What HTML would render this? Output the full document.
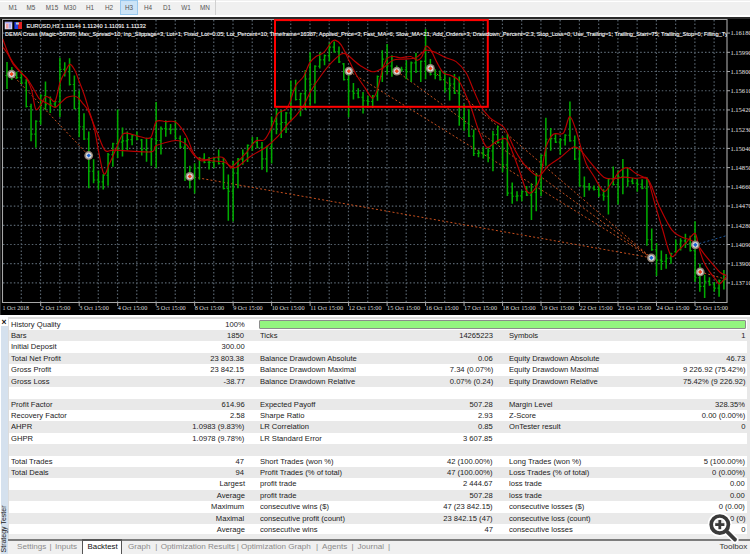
<!DOCTYPE html>
<html><head><meta charset="utf-8"><style>
*{margin:0;padding:0;box-sizing:border-box}
html,body{width:750px;height:554px;overflow:hidden;background:#f0f0f0;font-family:"Liberation Sans",sans-serif}
.abs{position:absolute}
#tb{position:absolute;left:0;top:0;width:750px;height:17px;background:#f0f0f0}
.tf{position:absolute;top:1.2px;width:20px;height:13px;line-height:13px;text-align:center;font-size:6.9px;color:#555;transform:scaleX(0.92)}
#chart{position:absolute;left:0;top:0}
#tbl{position:absolute;left:9px;top:318.6px;width:738px;height:221px;background:#fff;overflow:hidden}
.stripe{position:absolute;left:9px;width:738px;height:11.41px;background:#e9e9e9}
.tl,.tr{position:absolute;height:11.41px;line-height:11.81px;font-size:8.1px;color:#222;white-space:nowrap}
.tl{transform:scaleX(0.94);transform-origin:0 50%}
.tr{transform:scaleX(0.94);transform-origin:100% 50%}
.tab{position:absolute;top:540px;height:14px;line-height:13px;font-size:8.1px;color:#8a8a8a;white-space:nowrap}
.tab.sel{color:#111;font-size:7.9px}
</style></head><body>
<div id="tb">
<div class="abs" style="left:0;top:1.3px;width:750px;height:0.8px;background:#fff"></div>
<div class="abs" style="left:0;top:15px;width:750px;height:1.8px;background:#fff"></div>
<div class="abs" style="left:120px;top:0;width:18px;height:15px;background:#cce4f7;border:1px solid #99c9ef"></div>
<div class="tf" style="left:3px">M1</div><div class="tf" style="left:21px">M5</div><div class="tf" style="left:42px">M15</div><div class="tf" style="left:60px">M30</div><div class="tf" style="left:80px">H1</div><div class="tf" style="left:99px">H2</div><div class="tf" style="left:119px">H3</div><div class="tf" style="left:138px">H4</div><div class="tf" style="left:157px">D1</div><div class="tf" style="left:176px">W1</div><div class="tf" style="left:195px">MN</div>
<div class="abs" style="left:215px;top:0;width:1px;height:15px;background:#d0d0d0"></div>
</div>
<div class="abs" style="left:0;top:16.8px;width:750px;height:298px;background:#000"></div>
<div class="abs" style="left:0;top:16.8px;width:750px;height:2px;background:#2a2a2a"></div>
<div class="abs" style="left:0;top:16.8px;width:1.2px;height:298px;background:#2a2a2a"></div>
<svg id="chart" width="750" height="315" viewBox="0 0 750 315" style="position:absolute;left:0;top:0">
<defs><clipPath id="cl"><rect x="2.7" y="19.5" width="724.3" height="283"/></clipPath></defs>
<path d="M21.30 20V302 M40.55 20V302 M59.79 20V302 M79.03 20V302 M98.28 20V302 M117.53 20V302 M136.77 20V302 M156.02 20V302 M175.26 20V302 M194.51 20V302 M213.75 20V302 M233.00 20V302 M252.24 20V302 M271.49 20V302 M290.73 20V302 M309.98 20V302 M329.22 20V302 M348.47 20V302 M367.71 20V302 M386.96 20V302 M406.20 20V302 M425.45 20V302 M444.69 20V302 M463.94 20V302 M483.18 20V302 M502.43 20V302 M521.67 20V302 M540.91 20V302 M560.16 20V302 M579.40 20V302 M598.65 20V302 M617.89 20V302 M637.14 20V302 M656.38 20V302 M675.63 20V302 M694.88 20V302 M714.12 20V302 M3 33.08H727 M3 52.30H727 M3 71.52H727 M3 90.74H727 M3 109.96H727 M3 129.18H727 M3 148.40H727 M3 167.62H727 M3 186.84H727 M3 206.06H727 M3 225.28H727 M3 244.50H727 M3 263.72H727 M3 282.94H727" stroke="#58646f" stroke-width="1.2" stroke-dasharray="1.5 2.1" fill="none"/>
<path d="M2.5 19.5H727V302.5H2.5Z" stroke="#a8a8a8" stroke-width="1.1" fill="none"/>
<path d="M727 33.08H730 M727 52.30H730 M727 71.52H730 M727 90.74H730 M727 109.96H730 M727 129.18H730 M727 148.40H730 M727 167.62H730 M727 186.84H730 M727 206.06H730 M727 225.28H730 M727 244.50H730 M727 263.72H730 M727 282.94H730" stroke="#a8a8a8" stroke-width="1"/>
<g font-family="Liberation Serif" font-size="7.0" fill="#e4e4e4"><text x="730.4" y="35.48" textLength="21.3" lengthAdjust="spacingAndGlyphs">1.16180</text><text x="730.4" y="54.70" textLength="21.3" lengthAdjust="spacingAndGlyphs">1.15990</text><text x="730.4" y="73.92" textLength="21.3" lengthAdjust="spacingAndGlyphs">1.15800</text><text x="730.4" y="93.14" textLength="21.3" lengthAdjust="spacingAndGlyphs">1.15610</text><text x="730.4" y="112.36" textLength="21.3" lengthAdjust="spacingAndGlyphs">1.15420</text><text x="730.4" y="131.58" textLength="21.3" lengthAdjust="spacingAndGlyphs">1.15230</text><text x="730.4" y="150.80" textLength="21.3" lengthAdjust="spacingAndGlyphs">1.15040</text><text x="730.4" y="170.02" textLength="21.3" lengthAdjust="spacingAndGlyphs">1.14850</text><text x="730.4" y="189.24" textLength="21.3" lengthAdjust="spacingAndGlyphs">1.14660</text><text x="730.4" y="208.46" textLength="21.3" lengthAdjust="spacingAndGlyphs">1.14470</text><text x="730.4" y="227.68" textLength="21.3" lengthAdjust="spacingAndGlyphs">1.14280</text><text x="730.4" y="246.90" textLength="21.3" lengthAdjust="spacingAndGlyphs">1.14090</text><text x="730.4" y="266.12" textLength="21.3" lengthAdjust="spacingAndGlyphs">1.13900</text><text x="730.4" y="285.34" textLength="21.3" lengthAdjust="spacingAndGlyphs">1.13710</text></g>
<path d="M40.70 302.5V306 M79.19 302.5V306 M117.68 302.5V306 M156.17 302.5V306 M194.66 302.5V306 M233.15 302.5V306 M271.64 302.5V306 M310.13 302.5V306 M348.62 302.5V306 M387.11 302.5V306 M425.60 302.5V306 M464.09 302.5V306 M502.58 302.5V306 M541.07 302.5V306 M579.56 302.5V306 M618.05 302.5V306 M656.54 302.5V306 M695.03 302.5V306" stroke="#a8a8a8" stroke-width="1"/>
<g font-family="Liberation Serif" font-size="6.8" fill="#dcdcdc"><text x="2.6" y="310.1" textLength="26.5" lengthAdjust="spacingAndGlyphs">1 Oct 2018</text><text x="40.70" y="310.1" textLength="29.6" lengthAdjust="spacingAndGlyphs">2 Oct 15:00</text><text x="79.19" y="310.1" textLength="29.6" lengthAdjust="spacingAndGlyphs">3 Oct 15:00</text><text x="117.68" y="310.1" textLength="29.6" lengthAdjust="spacingAndGlyphs">4 Oct 15:00</text><text x="156.17" y="310.1" textLength="29.6" lengthAdjust="spacingAndGlyphs">5 Oct 15:00</text><text x="194.66" y="310.1" textLength="29.6" lengthAdjust="spacingAndGlyphs">8 Oct 15:00</text><text x="233.15" y="310.1" textLength="29.6" lengthAdjust="spacingAndGlyphs">9 Oct 15:00</text><text x="271.64" y="310.1" textLength="33.0" lengthAdjust="spacingAndGlyphs">10 Oct 15:00</text><text x="310.13" y="310.1" textLength="33.0" lengthAdjust="spacingAndGlyphs">11 Oct 15:00</text><text x="348.62" y="310.1" textLength="33.0" lengthAdjust="spacingAndGlyphs">12 Oct 15:00</text><text x="387.11" y="310.1" textLength="33.0" lengthAdjust="spacingAndGlyphs">15 Oct 15:00</text><text x="425.60" y="310.1" textLength="33.0" lengthAdjust="spacingAndGlyphs">16 Oct 15:00</text><text x="464.09" y="310.1" textLength="33.0" lengthAdjust="spacingAndGlyphs">17 Oct 15:00</text><text x="502.58" y="310.1" textLength="33.0" lengthAdjust="spacingAndGlyphs">18 Oct 15:00</text><text x="541.07" y="310.1" textLength="33.0" lengthAdjust="spacingAndGlyphs">19 Oct 15:00</text><text x="579.56" y="310.1" textLength="33.0" lengthAdjust="spacingAndGlyphs">22 Oct 15:00</text><text x="618.05" y="310.1" textLength="33.0" lengthAdjust="spacingAndGlyphs">23 Oct 15:00</text><text x="656.54" y="310.1" textLength="33.0" lengthAdjust="spacingAndGlyphs">24 Oct 15:00</text><text x="695.03" y="310.1" textLength="33.0" lengthAdjust="spacingAndGlyphs">25 Oct 15:00</text></g>
<g clip-path="url(#cl)">
<path d="M11.6 74.1L88.7 155.5 M189.8 176.4L651.4 257.8 M348.9 71.2L651.4 257.8 M396.8 71.2L651.4 257.8 M430.4 68.4L651.4 257.8 M700.2 271.9L727 279.5" stroke="#c8501e" stroke-width="1" stroke-dasharray="2 2.2" fill="none"/>
<path d="M695.3 244.8L727 235.5" stroke="#1e5aa0" stroke-width="1" stroke-dasharray="2 2.2" fill="none"/>
<path d="M7.00 62.1V88.9 M11.81 67.0V80.0 M16.62 71.8V79.1 M21.43 71.0V84.0 M26.25 79.1V107.5 M31.06 103.7V141.3 M35.87 120.3V147.8 M40.68 94.3V124.7 M45.49 81.5V110.0 M50.30 96.5V113.1 M55.11 100.8V107.3 M59.93 57.7V117.1 M64.74 62.2V76.6 M69.55 58.2V85.5 M74.36 75.4V109.5 M79.17 90.5V137.3 M83.98 113.3V140.0 M88.79 131.4V188.2 M93.61 159.2V183.2 M98.42 170.5V189.5 M103.23 174.3V189.5 M108.04 152.9V185.7 M112.85 142.7V166.8 M117.66 109.5V157.9 M122.47 127.6V156.6 M127.28 131.4V150.3 M132.10 133.9V145.3 M136.91 131.4V140.2 M141.72 139.0V155.4 M146.53 137.7V161.7 M151.34 138.0V165.8 M156.15 102.1V168.0 M160.96 126.6V154.4 M165.78 120.3V136.8 M170.59 124.1V134.2 M175.40 120.3V139.3 M180.21 135.5V148.1 M185.02 138.0V181.0 M189.83 165.8V188.6 M194.64 163.3V193.6 M199.46 157.0V179.7 M204.27 153.2V163.3 M209.08 157.0V169.6 M213.89 157.0V167.9 M218.70 149.4V164.6 M223.51 158.1V189.5 M228.32 174.4V220.7 M233.14 161.0V221.5 M237.95 158.1V188.2 M242.76 149.5V164.7 M247.57 144.4V162.1 M252.38 136.9V150.8 M257.19 136.9V148.2 M262.00 141.9V169.7 M266.82 145.7V172.2 M271.63 116.6V163.4 M276.44 108.2V134.3 M281.25 110.0V138.1 M286.06 112.0V133.1 M290.87 80.6V120.4 M295.68 79.8V100.5 M300.50 92.8V116.3 M305.31 70.0V109.9 M310.12 52.2V105.8 M314.93 65.2V103.4 M319.74 52.2V68.4 M324.55 54.6V65.2 M329.36 42.7V61.6 M334.18 41.4V52.8 M338.99 46.5V62.9 M343.80 62.9V80.6 M348.61 69.2V117.2 M353.42 83.1V99.6 M358.23 88.2V98.3 M363.04 92.0V113.5 M367.86 95.8V105.9 M372.67 95.0V108.0 M377.48 75.5V100.8 M382.29 50.3V81.9 M387.10 44.0V74.3 M391.91 55.3V76.8 M396.72 65.4V74.3 M401.53 66.7V71.8 M406.35 60.4V79.3 M411.16 61.6V81.9 M415.97 52.8V73.0 M420.78 60.4V81.9 M425.59 29.0V79.3 M430.40 59.1V75.5 M435.21 69.2V79.3 M440.03 70.5V80.6 M444.84 71.5V92.4 M449.65 77.2V100.6 M454.46 73.9V94.1 M459.27 76.4V125.7 M464.08 104.2V130.8 M468.89 109.3V137.1 M473.71 129.5V156.0 M478.52 149.7V157.3 M483.33 147.2V158.6 M488.14 147.2V162.3 M492.95 130.8V171.2 M497.76 125.7V143.4 M502.57 136.3V172.3 M507.39 133.8V196.1 M512.20 182.4V203.7 M517.01 191.2V201.2 M521.82 190.6V201.2 M526.63 186.0V196.1 M531.44 183.5V220.1 M536.25 173.4V211.3 M541.07 154.4V196.1 M545.88 117.8V165.8 M550.69 127.9V150.7 M555.50 134.2V143.1 M560.31 138.0V154.4 M565.12 134.2V145.6 M569.93 101.4V141.8 M574.75 135.5V160.0 M579.56 147.6V186.8 M584.37 176.6V196.9 M589.18 183.0V190.5 M593.99 185.5V190.5 M598.80 184.2V196.9 M603.61 189.3V200.7 M608.42 177.9V214.6 M613.24 166.5V185.5 M618.05 170.3V204.4 M622.86 159.0V194.3 M627.67 167.8V186.8 M632.48 177.9V184.2 M637.29 179.2V191.8 M642.10 179.2V189.3 M646.92 177.3V245.8 M651.73 228.5V250.8 M656.54 243.1V276.0 M661.35 250.4V269.9 M666.16 254.1V268.7 M670.97 252.8V263.8 M675.78 239.4V252.8 M680.60 238.2V250.4 M685.41 233.8V248.0 M690.22 235.8V251.6 M695.03 221.2V282.1 M699.84 263.8V291.8 M704.65 274.8V297.9 M709.46 277.2V285.7 M714.28 282.1V291.8 M719.09 279.6V296.7 M723.90 269.9V289.4" stroke="#00ac00" stroke-width="1.55" fill="none"/>
<path d="M5.40 75.5H7.00M7.00 73.5H8.60 M10.21 73.5H11.81M11.81 75.4H13.41 M15.02 75.4H16.62M16.62 77.5H18.22 M19.83 77.5H21.43M21.43 83.0H23.03 M24.65 83.0H26.25M26.25 106.5H27.85 M29.46 106.5H31.06M31.06 134.1H32.66 M34.27 134.1H35.87M35.87 121.3H37.47 M39.08 121.3H40.68M40.68 95.8H42.28 M43.89 95.8H45.49M45.49 104.8H47.09 M48.70 104.8H50.30M50.30 104.0H51.90 M53.51 104.0H55.11M55.11 101.8H56.71 M58.33 101.8H59.93M59.93 69.4H61.53 M63.14 69.4H64.74M64.74 71.8H66.34 M67.95 71.8H69.55M69.55 84.5H71.15 M72.76 84.5H74.36M74.36 108.5H75.96 M77.57 108.5H79.17M79.17 126.7H80.77 M82.38 126.7H83.98M83.98 139.0H85.58 M87.19 139.0H88.79M88.79 171.2H90.39 M92.01 171.2H93.61M93.61 180.0H95.21 M96.82 180.0H98.42M98.42 181.9H100.02 M101.63 181.9H103.23M103.23 175.3H104.83 M106.44 175.3H108.04M108.04 154.8H109.64 M111.25 154.8H112.85M112.85 143.7H114.45 M116.06 143.7H117.66M117.66 142.1H119.26 M120.87 142.1H122.47M122.47 140.9H124.07 M125.69 140.9H127.28M127.28 139.6H128.88 M130.50 139.6H132.10M132.10 135.8H133.70 M135.31 135.8H136.91M136.91 139.2H138.51 M140.12 140.0H141.72M141.72 149.7H143.32 M144.93 149.7H146.53M146.53 151.9H148.13 M149.74 151.9H151.34M151.34 139.0H152.94 M154.55 139.0H156.15M156.15 140.5H157.75 M159.36 140.5H160.96M160.96 128.6H162.56 M164.18 128.6H165.78M165.78 129.1H167.38 M168.99 129.1H170.59M170.59 129.8H172.19 M173.80 129.8H175.40M175.40 138.3H177.00 M178.61 138.3H180.21M180.21 147.1H181.81 M183.42 147.1H185.02M185.02 177.2H186.62 M188.23 177.2H189.83M189.83 178.4H191.43 M193.04 178.4H194.64M194.64 168.3H196.24 M197.86 168.3H199.46M199.46 158.2H201.06 M202.67 158.2H204.27M204.27 162.3H205.87 M207.48 162.3H209.08M209.08 162.4H210.68 M212.29 162.4H213.89M213.89 158.0H215.49 M217.10 158.0H218.70M218.70 163.6H220.30 M221.91 163.6H223.51M223.51 188.5H225.11 M226.72 188.5H228.32M228.32 191.2H229.92 M231.54 191.2H233.14M233.14 173.1H234.74 M236.35 173.1H237.95M237.95 159.1H239.55 M241.16 159.1H242.76M242.76 153.2H244.36 M245.97 153.2H247.57M247.57 145.4H249.17 M250.78 145.4H252.38M252.38 142.6H253.98 M255.59 142.6H257.19M257.19 147.2H258.79 M260.40 147.2H262.00M262.00 158.9H263.60 M265.22 158.9H266.82M266.82 146.7H268.42 M270.03 146.7H271.63M271.63 121.2H273.23 M274.84 121.2H276.44M276.44 124.0H278.04 M279.65 124.0H281.25M281.25 122.5H282.85 M284.46 122.5H286.06M286.06 113.0H287.66 M289.27 113.0H290.87M290.87 90.2H292.47 M294.08 90.2H295.68M295.68 99.5H297.28 M298.90 99.5H300.50M300.50 93.8H302.10 M303.71 93.8H305.31M305.31 79.0H306.91 M308.52 79.0H310.12M310.12 84.3H311.72 M313.33 84.3H314.93M314.93 66.2H316.53 M318.14 66.2H319.74M319.74 59.9H321.34 M322.95 59.9H324.55M324.55 55.6H326.15 M327.76 55.6H329.36M329.36 47.1H330.96 M332.58 47.1H334.18M334.18 51.8H335.78 M337.39 51.8H338.99M338.99 61.9H340.59 M342.20 63.9H343.80M343.80 79.6H345.40 M347.01 79.6H348.61M348.61 91.3H350.21 M351.82 91.3H353.42M353.42 93.2H355.02 M356.63 93.2H358.23M358.23 97.3H359.83 M361.44 97.3H363.04M363.04 100.8H364.64 M366.25 100.8H367.86M367.86 101.5H369.46 M371.07 101.5H372.67M372.67 96.0H374.27 M375.88 96.0H377.48M377.48 76.5H379.08 M380.69 76.5H382.29M382.29 59.1H383.89 M385.50 59.1H387.10M387.10 66.0H388.70 M390.31 66.0H391.91M391.91 69.8H393.51 M395.12 69.8H396.72M396.72 69.2H398.32 M399.93 69.2H401.53M401.53 69.8H403.13 M404.75 69.8H406.35M406.35 71.8H407.95 M409.56 71.8H411.16M411.16 62.9H412.76 M414.37 62.9H415.97M415.97 71.2H417.57 M419.18 71.2H420.78M420.78 61.4H422.38 M423.99 61.4H425.59M425.59 67.3H427.19 M428.80 67.3H430.40M430.40 74.2H432.00 M433.61 74.2H435.21M435.21 75.5H436.81 M438.43 75.5H440.03M440.03 79.6H441.63 M443.24 79.6H444.84M444.84 88.9H446.44 M448.05 88.9H449.65M449.65 84.0H451.25 M452.86 84.0H454.46M454.46 93.1H456.06 M457.67 93.1H459.27M459.27 117.5H460.87 M462.48 117.5H464.08M464.08 123.2H465.68 M467.29 123.2H468.89M468.89 136.1H470.49 M472.11 136.1H473.71M473.71 153.5H475.31 M476.92 153.5H478.52M478.52 152.9H480.12 M481.73 152.9H483.33M483.33 154.8H484.93 M486.54 154.8H488.14M488.14 151.0H489.74 M491.35 151.0H492.95M492.95 134.6H494.55 M496.16 134.6H497.76M497.76 142.4H499.36 M500.97 142.4H502.57M502.57 164.9H504.17 M505.79 164.9H507.39M507.39 193.1H508.99 M510.60 193.1H512.20M512.20 196.2H513.80 M515.41 196.2H517.01M517.01 195.9H518.61 M520.22 195.9H521.82M521.82 191.6H523.42 M525.03 191.6H526.63M526.63 195.1H528.23 M529.84 195.1H531.44M531.44 192.4H533.04 M534.65 192.4H536.25M536.25 175.2H537.85 M539.47 175.2H541.07M541.07 155.4H542.67 M544.28 155.4H545.88M545.88 139.3H547.48 M549.09 139.3H550.69M550.69 138.6H552.29 M553.90 138.6H555.50M555.50 142.1H557.10 M558.71 142.1H560.31M560.31 139.9H561.91 M563.52 139.9H565.12M565.12 135.2H566.72 M568.33 135.2H569.93M569.93 140.8H571.53 M573.15 140.8H574.75M574.75 159.0H576.35 M577.96 159.0H579.56M579.56 185.8H581.16 M582.77 185.8H584.37M584.37 186.8H585.97 M587.58 186.8H589.18M589.18 188.0H590.78 M592.39 188.0H593.99M593.99 189.5H595.59 M597.20 189.5H598.80M598.80 195.0H600.40 M602.01 195.0H603.61M603.61 196.2H605.21 M606.82 196.2H608.42M608.42 178.9H610.02 M611.64 178.9H613.24M613.24 184.5H614.84 M616.45 184.5H618.05M618.05 176.7H619.65 M621.26 176.7H622.86M622.86 177.3H624.46 M626.07 177.3H627.67M627.67 181.1H629.27 M630.88 181.1H632.48M632.48 183.2H634.08 M635.69 183.2H637.29M637.29 184.2H638.89 M640.50 184.2H642.10M642.10 188.3H643.70 M645.32 188.3H646.92M646.92 239.7H648.52 M650.13 239.7H651.73M651.73 249.8H653.33 M654.94 249.8H656.54M656.54 260.1H658.14 M659.75 260.1H661.35M661.35 261.4H662.95 M664.56 261.4H666.16M666.16 258.3H667.76 M669.37 258.3H670.97M670.97 253.8H672.57 M674.18 251.8H675.78M675.78 244.3H677.38 M679.00 244.3H680.60M680.60 240.9H682.20 M683.81 240.9H685.41M685.41 243.7H687.01 M688.62 243.7H690.22M690.22 250.6H691.82 M693.43 250.6H695.03M695.03 277.8H696.63 M698.24 277.8H699.84M699.84 286.4H701.44 M703.05 286.4H704.65M704.65 281.4H706.25 M707.86 281.4H709.46M709.46 284.7H711.06 M712.68 284.7H714.28M714.28 288.1H715.88 M717.49 288.1H719.09M719.09 280.6H720.69 M722.30 280.6H723.90M723.90 279.6H725.50" stroke="#00ac00" stroke-width="1.1" fill="none"/>
<path d="M2.8 39.0 C3.6 41.3 6.5 49.4 8.1 53.2 C9.7 57.0 10.9 59.4 13.0 62.5 C15.1 65.6 18.9 69.9 21.1 72.5 C23.3 75.1 25.1 76.2 26.8 79.0 C28.5 81.8 30.3 85.5 31.7 90.3 C33.1 95.1 34.3 106.6 35.7 109.0 C37.1 111.4 39.0 107.0 40.6 105.0 C42.2 103.0 43.9 97.9 45.5 96.8 C47.1 95.7 48.7 97.7 50.3 98.4 C51.9 99.1 53.6 103.5 55.2 100.9 C56.8 98.3 58.5 86.7 60.1 82.2 C61.7 77.7 63.3 75.3 64.9 72.5 C66.5 69.7 68.2 64.8 69.8 64.4 C71.4 64.0 73.1 67.2 74.7 70.0 C76.3 72.8 77.9 78.2 79.5 82.2 C81.1 86.2 82.8 90.5 84.4 95.2 C86.0 99.9 87.7 106.2 89.3 111.4 C90.9 116.6 92.0 117.9 94.2 127.7 C96.4 137.5 100.8 166.7 103.2 172.5 C105.6 178.3 107.4 167.3 109.3 163.8 C111.2 160.3 113.1 155.4 115.3 150.7 C117.5 146.0 120.3 136.8 122.9 134.2 C125.5 131.6 128.9 133.8 131.7 134.2 C134.5 134.6 137.5 136.3 140.5 136.8 C143.5 137.3 148.2 139.9 150.7 137.5 C153.2 135.1 153.8 124.1 156.2 121.6 C158.6 119.1 162.6 121.5 165.8 121.6 C169.0 121.7 172.7 120.1 175.9 122.3 C179.1 124.5 183.2 130.6 186.0 135.5 C188.8 140.4 191.2 149.2 193.6 153.2 C196.0 157.2 198.4 160.0 201.2 160.8 C204.0 161.6 208.5 158.8 211.3 158.2 C214.1 157.6 216.9 157.0 218.9 157.0 C220.9 157.0 222.1 156.6 223.9 158.2 C225.7 159.8 228.6 165.8 230.0 167.1 C231.4 168.4 230.2 168.6 232.6 166.5 C235.0 164.4 241.7 157.8 245.3 153.8 C248.9 149.8 252.4 143.4 255.4 141.2 C258.4 139.0 261.8 141.7 264.2 139.9 C266.6 138.1 268.3 134.0 270.5 129.8 C272.7 125.6 275.7 116.6 278.1 113.4 C280.5 110.2 283.9 111.2 285.7 109.6 C287.5 108.0 287.9 107.1 289.5 103.3 C291.1 99.5 293.6 89.8 295.8 85.6 C298.0 81.4 301.2 80.4 303.4 76.8 C305.6 73.2 307.7 66.1 309.7 62.9 C311.7 59.7 313.8 58.1 316.0 56.5 C318.2 54.9 321.2 54.9 323.6 52.7 C326.0 50.5 329.4 44.6 331.2 42.6 C333.0 40.6 333.4 39.7 335.0 40.1 C336.6 40.5 339.1 42.0 341.3 45.2 C343.5 48.4 346.4 55.4 348.9 60.3 C351.4 65.2 354.4 71.6 357.0 76.0 C359.6 80.4 362.7 84.5 365.2 88.1 C367.7 91.7 370.7 98.2 372.7 98.2 C374.7 98.2 376.2 92.9 377.8 88.1 C379.4 83.3 381.3 72.7 382.9 67.9 C384.5 63.1 386.1 59.6 387.9 57.8 C389.7 56.0 392.2 56.5 394.2 56.5 C396.2 56.5 397.9 57.8 400.5 57.8 C403.1 57.8 408.1 56.1 410.7 56.5 C413.3 56.9 415.2 60.3 417.0 60.3 C418.8 60.3 420.6 58.7 422.0 56.5 C423.4 54.3 424.4 47.4 425.8 46.4 C427.2 45.4 429.1 47.6 430.9 50.2 C432.7 52.8 435.2 59.3 437.2 62.9 C439.2 66.5 441.3 71.0 443.5 73.0 C445.7 75.0 448.7 74.3 451.1 75.5 C453.5 76.7 456.5 77.7 458.7 80.5 C460.9 83.3 463.0 88.8 465.0 93.2 C467.0 97.6 469.1 102.2 471.3 108.3 C473.5 114.4 476.5 124.9 478.9 131.1 C481.3 137.3 484.1 145.1 486.5 147.0 C488.9 148.9 491.7 144.4 493.9 143.2 C496.1 142.0 498.2 140.0 500.2 139.4 C502.2 138.8 504.5 137.2 506.5 139.4 C508.5 141.6 510.7 147.8 512.9 153.3 C515.1 158.8 518.2 167.4 520.4 173.5 C522.6 179.6 524.8 188.4 526.8 191.2 C528.8 194.0 530.9 193.6 533.1 191.2 C535.3 188.8 538.7 182.9 540.7 176.0 C542.7 169.1 543.7 154.9 545.7 148.2 C547.7 141.5 550.5 136.7 553.3 134.3 C556.1 131.9 560.8 135.9 563.4 133.1 C566.0 130.3 567.7 117.0 569.7 116.6 C571.7 116.2 574.2 125.4 576.0 130.5 C577.8 135.6 579.5 142.9 581.1 148.2 C582.7 153.5 584.1 159.0 586.1 163.4 C588.1 167.8 590.9 171.5 593.7 176.0 C596.5 180.5 601.0 190.4 603.8 191.5 C606.6 192.6 609.0 186.1 611.4 183.0 C613.8 179.9 616.5 174.5 619.0 172.0 C621.5 169.5 624.5 167.4 627.1 167.6 C629.7 167.8 632.6 171.5 635.2 173.0 C637.8 174.5 641.2 176.0 643.3 177.1 C645.4 178.2 646.5 175.9 648.2 179.8 C649.9 183.7 651.9 193.6 654.2 201.4 C656.5 209.2 659.6 219.8 662.3 228.5 C665.0 237.2 668.3 252.1 670.9 255.6 C673.5 259.1 676.0 252.4 678.5 250.2 C681.0 248.0 684.1 244.8 686.7 242.1 C689.3 239.4 693.1 232.6 695.0 233.4 C696.9 234.2 697.5 242.8 698.8 247.2 C700.1 251.6 701.7 257.1 703.4 261.0 C705.1 264.9 707.5 268.8 709.5 271.7 C711.5 274.6 714.1 277.4 715.7 279.4 C717.3 281.4 718.2 284.0 719.5 284.0 C720.8 284.0 723.0 280.6 724.1 279.4 C725.2 278.2 726.1 277.0 726.5 276.5" stroke="#b80000" stroke-width="1.15" fill="none" stroke-linejoin="round"/>
<path d="M2.8 47.1 C3.6 48.3 6.5 51.7 8.1 54.4 C9.7 57.1 10.9 60.9 13.0 63.8 C15.1 66.7 18.9 70.5 21.1 72.8 C23.3 75.1 25.0 75.8 26.8 78.1 C28.6 80.4 30.5 83.9 32.5 87.1 C34.5 90.3 37.2 96.1 39.0 98.4 C40.8 100.7 42.0 100.7 43.8 101.7 C45.6 102.7 48.5 104.0 50.3 104.9 C52.1 105.8 53.6 107.7 55.2 107.4 C56.8 107.1 58.3 104.9 60.1 103.3 C61.9 101.7 64.5 98.8 66.6 97.6 C68.7 96.4 71.3 96.0 73.1 96.0 C74.9 96.0 76.3 96.4 77.9 97.6 C79.5 98.8 81.2 101.3 82.8 103.3 C84.4 105.3 86.1 106.9 87.7 109.8 C89.3 112.7 90.8 117.1 92.5 121.2 C94.2 125.3 96.2 130.6 98.2 135.3 C100.2 140.0 102.5 148.1 105.2 150.5 C107.9 152.9 108.0 149.9 115.3 150.1 C122.6 150.3 144.2 152.6 150.7 151.9 C157.2 151.2 152.2 147.4 156.2 145.6 C160.2 143.8 171.1 140.7 175.9 140.5 C180.7 140.3 182.8 141.7 186.0 144.3 C189.2 146.9 192.1 154.4 196.1 157.0 C200.1 159.6 206.9 160.0 211.3 160.8 C215.7 161.6 220.1 160.9 223.9 162.0 C227.7 163.1 231.0 168.6 235.2 167.7 C239.4 166.8 245.5 159.6 250.3 156.4 C255.1 153.2 261.1 150.7 265.5 147.5 C269.9 144.3 274.5 139.9 278.1 136.1 C281.7 132.3 285.4 126.7 288.2 123.5 C291.0 120.3 293.4 118.7 295.8 115.9 C298.2 113.1 301.0 109.8 303.4 105.8 C305.8 101.8 308.2 95.5 311.0 90.7 C313.8 85.9 317.9 79.9 321.1 75.5 C324.3 71.1 328.0 66.3 331.2 62.9 C334.4 59.5 338.9 55.4 341.3 54.0 C343.7 52.6 344.4 53.0 346.4 54.0 C348.4 55.0 351.7 58.7 353.9 60.5 C356.1 62.3 357.1 63.6 360.1 65.4 C363.1 67.2 369.1 71.3 372.7 71.7 C376.3 72.1 379.7 69.7 382.9 67.9 C386.1 66.1 389.8 61.7 393.0 60.3 C396.2 58.9 399.5 59.5 403.1 59.1 C406.7 58.7 412.1 59.2 415.7 57.8 C419.3 56.4 422.6 51.0 425.8 50.2 C429.0 49.4 432.7 51.5 435.9 52.7 C439.1 53.9 442.8 56.4 446.0 57.8 C449.2 59.2 452.9 59.2 456.1 61.6 C459.3 64.0 463.4 68.3 466.2 73.0 C469.0 77.7 471.4 85.3 473.8 90.7 C476.2 96.1 478.8 102.6 481.4 107.0 C484.0 111.4 487.5 115.3 490.1 117.9 C492.7 120.5 495.3 121.2 497.7 123.0 C500.1 124.8 502.5 124.9 505.3 129.3 C508.1 133.7 512.2 144.9 515.4 150.8 C518.6 156.7 521.9 161.9 525.5 165.9 C529.1 169.9 534.5 176.0 538.1 176.0 C541.7 176.0 544.6 168.9 548.2 165.9 C551.8 162.9 556.9 160.1 560.9 157.1 C564.9 154.1 570.3 148.0 573.5 147.0 C576.7 146.0 578.3 148.2 581.1 150.8 C583.9 153.4 587.6 159.2 591.2 163.4 C594.8 167.6 600.2 174.9 603.8 177.3 C607.4 179.7 610.6 178.6 613.9 178.6 C617.2 178.6 621.0 177.1 624.4 177.1 C627.8 177.1 631.4 178.0 635.2 178.4 C639.0 178.8 644.3 175.2 648.2 179.8 C652.1 184.4 655.8 198.9 659.6 206.9 C663.4 214.9 668.3 225.1 671.8 229.9 C675.3 234.7 678.0 235.0 681.2 236.7 C684.4 238.4 689.3 239.1 692.1 240.7 C694.9 242.3 696.8 244.3 698.8 246.6 C700.8 248.9 702.7 252.1 704.9 254.9 C707.1 257.7 710.1 261.3 712.6 264.1 C715.1 266.9 718.1 270.7 720.3 272.5 C722.5 274.3 725.5 275.1 726.5 275.6" stroke="#b80000" stroke-width="1.15" fill="none" stroke-linejoin="round"/>
<circle cx="11.6" cy="74.1" r="4.4" fill="#948474"/><circle cx="11.6" cy="74.1" r="2.9" fill="#d4d8dc"/><path d="M11.6 72.0L13.7 74.1L11.6 76.19999999999999L9.5 74.1Z" fill="#f0401a"/>
<circle cx="88.7" cy="155.5" r="4.4" fill="#948474"/><circle cx="88.7" cy="155.5" r="2.9" fill="#d4d8dc"/><path d="M88.7 153.4L90.8 155.5L88.7 157.6L86.60000000000001 155.5Z" fill="#1a62d0"/>
<circle cx="189.8" cy="176.4" r="4.4" fill="#948474"/><circle cx="189.8" cy="176.4" r="2.9" fill="#d4d8dc"/><path d="M189.8 174.3L191.9 176.4L189.8 178.5L187.70000000000002 176.4Z" fill="#f0401a"/>
<circle cx="348.9" cy="71.2" r="4.4" fill="#948474"/><circle cx="348.9" cy="71.2" r="2.9" fill="#d4d8dc"/><path d="M348.9 69.10000000000001L351.0 71.2L348.9 73.3L346.79999999999995 71.2Z" fill="#f0401a"/>
<circle cx="396.8" cy="71.2" r="4.4" fill="#948474"/><circle cx="396.8" cy="71.2" r="2.9" fill="#d4d8dc"/><path d="M396.8 69.10000000000001L398.90000000000003 71.2L396.8 73.3L394.7 71.2Z" fill="#f0401a"/>
<circle cx="430.4" cy="68.4" r="4.4" fill="#948474"/><circle cx="430.4" cy="68.4" r="2.9" fill="#d4d8dc"/><path d="M430.4 66.30000000000001L432.5 68.4L430.4 70.5L428.29999999999995 68.4Z" fill="#f0401a"/>
<circle cx="651.4" cy="257.8" r="4.4" fill="#948474"/><circle cx="651.4" cy="257.8" r="2.9" fill="#d4d8dc"/><path d="M651.4 255.70000000000002L653.5 257.8L651.4 259.90000000000003L649.3 257.8Z" fill="#1a62d0"/>
<circle cx="695.3" cy="244.8" r="4.4" fill="#948474"/><circle cx="695.3" cy="244.8" r="2.9" fill="#d4d8dc"/><path d="M695.3 242.70000000000002L697.4 244.8L695.3 246.9L693.1999999999999 244.8Z" fill="#1a62d0"/>
<circle cx="700.2" cy="271.9" r="4.4" fill="#948474"/><circle cx="700.2" cy="271.9" r="2.9" fill="#d4d8dc"/><path d="M700.2 269.79999999999995L702.3000000000001 271.9L700.2 274.0L698.1 271.9Z" fill="#f0401a"/>
</g>
<rect x="275" y="20.1" width="212.8" height="86.7" fill="none" stroke="#ff0000" stroke-width="2"/>
<g font-family="Liberation Sans" font-size="5.72" fill="#f4f4f4" stroke="#f4f4f4" stroke-width="0.12">
<text x="26.4" y="27.6">EURUSD,H3  1.11144 1.11240 1.11091 1.11132</text>
</g>
<svg x="0" y="0" width="727" height="315"><text x="5" y="36.2" font-family="Liberation Sans" font-size="5.697" fill="#f4f4f4" stroke="#f4f4f4" stroke-width="0.12">DEMA Cross (Magic=56789; Max_Spread=10; Inp_Slippage=3; Lot=1; Fixed_Lot=0.05; Lot_Percent=10; Timeframe=16387; Applied_Price=3; Fast_MA=6; Slow_MA=21; Add_Orders=3; Drawdown_Percent=2.3; Stop_Loss=0; Use_Trailing=1; Trailing_Start=75; Trailing_Stop=0; Filling_Type=1)</text></svg>
<rect x="5" y="22" width="7" height="7" fill="#f4f0f4" stroke="#c8c8e8" stroke-width="0.6"/><rect x="6" y="23.5" width="2.5" height="5" fill="#f0a0a0"/><rect x="8.7" y="23.5" width="2.5" height="5" fill="#a0a8f0"/><rect x="5" y="22" width="7" height="1.3" fill="#a0a0f0"/>
<rect x="14.4" y="22" width="3.8" height="7" fill="#2040e0"/><rect x="18.2" y="22" width="3.8" height="7" fill="#e02020"/><rect x="16" y="22.5" width="3" height="2" fill="#c0c8c0"/>
</svg>
<div class="abs" style="left:0;top:314.7px;width:750px;height:226px;background:#fff"></div>
<div class="abs" style="left:8.3px;top:316.9px;width:742px;height:1.8px;background:#dedede"></div>
<div class="abs" style="left:8.3px;top:317.7px;width:1px;height:222px;background:#dcdcdc"></div>
<div class="abs" style="left:0.5px;top:325.8px;width:7px;height:230px;background:#d5e1ee"></div>
<div class="abs" style="left:0.5px;top:316.5px;width:7px;height:10px;font-size:8.5px;line-height:10px;text-align:center;color:#111;font-weight:bold">&#215;</div>
<div class="abs" style="left:-37px;top:525.3px;width:82px;height:8px;font-size:7px;line-height:8px;color:#222;transform:rotate(-90deg);text-align:center;white-space:nowrap">Strategy Tester</div>
<div class="stripe" style="top:330.05px"></div><div class="stripe" style="top:352.87px"></div><div class="stripe" style="top:375.69px"></div><div class="stripe" style="top:398.51px"></div><div class="stripe" style="top:421.33px"></div><div class="stripe" style="top:444.15px"></div><div class="stripe" style="top:466.97px"></div><div class="stripe" style="top:489.79px"></div><div class="stripe" style="top:512.61px"></div><div class="stripe" style="top:535.43px"></div><div class="tl" style="left:11px;top:318.64px">History Quality</div><div class="tr" style="right:505.5px;top:318.64px">100%</div><div class="tl" style="left:11px;top:330.05px">Bars</div><div class="tr" style="right:505.5px;top:330.05px">1850</div><div class="tl" style="left:11px;top:341.46px">Initial Deposit</div><div class="tr" style="right:505.5px;top:341.46px">300.00</div><div class="tl" style="left:11px;top:352.87px">Total Net Profit</div><div class="tr" style="right:505.5px;top:352.87px">23 803.38</div><div class="tl" style="left:11px;top:364.28px">Gross Profit</div><div class="tr" style="right:505.5px;top:364.28px">23 842.15</div><div class="tl" style="left:11px;top:375.69px">Gross Loss</div><div class="tr" style="right:505.5px;top:375.69px">-38.77</div><div class="tl" style="left:11px;top:398.51px">Profit Factor</div><div class="tr" style="right:505.5px;top:398.51px">614.96</div><div class="tl" style="left:11px;top:409.92px">Recovery Factor</div><div class="tr" style="right:505.5px;top:409.92px">2.58</div><div class="tl" style="left:11px;top:421.33px">AHPR</div><div class="tr" style="right:505.5px;top:421.33px">1.0983 (9.83%)</div><div class="tl" style="left:11px;top:432.74px">GHPR</div><div class="tr" style="right:505.5px;top:432.74px">1.0978 (9.78%)</div><div class="tl" style="left:11px;top:455.56px">Total Trades</div><div class="tr" style="right:505.5px;top:455.56px">47</div><div class="tl" style="left:11px;top:466.97px">Total Deals</div><div class="tr" style="right:505.5px;top:466.97px">94</div><div class="tr" style="right:505.5px;top:478.38px">Largest</div><div class="tr" style="right:505.5px;top:489.79px">Average</div><div class="tr" style="right:505.5px;top:501.20px">Maximum</div><div class="tr" style="right:505.5px;top:512.61px">Maximal</div><div class="tr" style="right:505.5px;top:524.02px">Average</div><div class="tl" style="left:260px;top:330.05px">Ticks</div><div class="tr" style="right:257.0px;top:330.05px">14265223</div><div class="tl" style="left:260px;top:352.87px">Balance Drawdown Absolute</div><div class="tr" style="right:257.0px;top:352.87px">0.06</div><div class="tl" style="left:260px;top:364.28px">Balance Drawdown Maximal</div><div class="tr" style="right:257.0px;top:364.28px">7.34 (0.07%)</div><div class="tl" style="left:260px;top:375.69px">Balance Drawdown Relative</div><div class="tr" style="right:257.0px;top:375.69px">0.07% (0.24)</div><div class="tl" style="left:260px;top:398.51px">Expected Payoff</div><div class="tr" style="right:257.0px;top:398.51px">507.28</div><div class="tl" style="left:260px;top:409.92px">Sharpe Ratio</div><div class="tr" style="right:257.0px;top:409.92px">2.93</div><div class="tl" style="left:260px;top:421.33px">LR Correlation</div><div class="tr" style="right:257.0px;top:421.33px">0.85</div><div class="tl" style="left:260px;top:432.74px">LR Standard Error</div><div class="tr" style="right:257.0px;top:432.74px">3 607.85</div><div class="tl" style="left:260px;top:455.56px">Short Trades (won %)</div><div class="tr" style="right:257.0px;top:455.56px">42 (100.00%)</div><div class="tl" style="left:260px;top:466.97px">Profit Trades (% of total)</div><div class="tr" style="right:257.0px;top:466.97px">47 (100.00%)</div><div class="tl" style="left:260px;top:478.38px">profit trade</div><div class="tr" style="right:257.0px;top:478.38px">2 444.67</div><div class="tl" style="left:260px;top:489.79px">profit trade</div><div class="tr" style="right:257.0px;top:489.79px">507.28</div><div class="tl" style="left:260px;top:501.20px">consecutive wins ($)</div><div class="tr" style="right:257.0px;top:501.20px">47 (23 842.15)</div><div class="tl" style="left:260px;top:512.61px">consecutive profit (count)</div><div class="tr" style="right:257.0px;top:512.61px">23 842.15 (47)</div><div class="tl" style="left:260px;top:524.02px">consecutive wins</div><div class="tr" style="right:257.0px;top:524.02px">47</div><div class="tl" style="left:509px;top:330.05px">Symbols</div><div class="tr" style="right:4.8px;top:330.05px">1</div><div class="tl" style="left:509px;top:352.87px">Equity Drawdown Absolute</div><div class="tr" style="right:4.8px;top:352.87px">46.73</div><div class="tl" style="left:509px;top:364.28px">Equity Drawdown Maximal</div><div class="tr" style="right:4.8px;top:364.28px">9 226.92 (75.42%)</div><div class="tl" style="left:509px;top:375.69px">Equity Drawdown Relative</div><div class="tr" style="right:4.8px;top:375.69px">75.42% (9 226.92)</div><div class="tl" style="left:509px;top:398.51px">Margin Level</div><div class="tr" style="right:4.8px;top:398.51px">328.35%</div><div class="tl" style="left:509px;top:409.92px">Z-Score</div><div class="tr" style="right:4.8px;top:409.92px">0.00 (0.00%)</div><div class="tl" style="left:509px;top:421.33px">OnTester result</div><div class="tr" style="right:4.8px;top:421.33px">0</div><div class="tl" style="left:509px;top:455.56px">Long Trades (won %)</div><div class="tr" style="right:4.8px;top:455.56px">5 (100.00%)</div><div class="tl" style="left:509px;top:466.97px">Loss Trades (% of total)</div><div class="tr" style="right:4.8px;top:466.97px">0 (0.00%)</div><div class="tl" style="left:509px;top:478.38px">loss trade</div><div class="tr" style="right:4.8px;top:478.38px">0.00</div><div class="tl" style="left:509px;top:489.79px">loss trade</div><div class="tr" style="right:4.8px;top:489.79px">0.00</div><div class="tl" style="left:509px;top:501.20px">consecutive losses ($)</div><div class="tr" style="right:4.8px;top:501.20px">0 (0.00)</div><div class="tl" style="left:509px;top:512.61px">consecutive loss (count)</div><div class="tr" style="right:4.8px;top:512.61px">0 (0)</div><div class="tl" style="left:509px;top:524.02px">consecutive losses</div><div class="tr" style="right:4.8px;top:524.02px">0</div>
<div class="abs" style="left:259.2px;top:319.8px;width:486.7px;height:8.9px;background:#93f57f;border:1px solid #8c8c8c;border-radius:1px"></div>
<div class="abs" style="left:747px;top:318.6px;width:3px;height:221px;background:#e8e8e8"></div>
<div class="abs" style="left:9px;top:534.2px;width:738px;height:4.8px;background:#ececec"></div>
<div class="abs" style="left:8.3px;top:538.9px;width:742px;height:1.8px;background:#7c7c7c"></div>
<div class="abs" style="left:8.3px;top:540.7px;width:742px;height:14px;background:#f0f0f0"></div>
<div class="abs" style="left:81.8px;top:539px;width:40px;height:16px;background:#fff;border:1px solid #555;border-top:2px solid #555;border-bottom:none"></div>
<div class="tab" style="left:17px">Settings</div><div class="tab" style="left:49.5px">|</div><div class="tab" style="left:55px">Inputs</div><div class="tab sel" style="left:87.5px">Backtest</div><div class="tab" style="left:128px">Graph</div><div class="tab" style="left:155.2px">|</div><div class="tab" style="left:160.8px">Optimization Results</div><div class="tab" style="left:236.8px">|</div><div class="tab" style="left:241px">Optimization Graph</div><div class="tab" style="left:316px">|</div><div class="tab" style="left:322px">Agents</div><div class="tab" style="left:351.6px">|</div><div class="tab" style="left:357.5px">Journal</div><div class="tab" style="left:388px">|</div>
<div class="abs" style="left:719.5px;top:539.8px;height:14px;line-height:13px;font-size:8.1px;color:#333">Toolbox</div>
<svg class="abs" style="left:700px;top:505px" width="50" height="45" viewBox="700 505 50 45">
<g stroke="#fff" stroke-width="7" fill="none" stroke-linecap="round"><circle cx="719.8" cy="524.6" r="8.6"/><line x1="727" y1="531.6" x2="735" y2="539.6"/></g>
<g stroke="#3a3a3a" stroke-width="3.7" fill="none" stroke-linecap="round"><circle cx="719.8" cy="524.6" r="8.6"/><line x1="727" y1="531.6" x2="735" y2="539.6"/></g>
<g stroke="#3a3a3a" stroke-width="2.8"><line x1="715.2" y1="524.6" x2="724.4" y2="524.6"/><line x1="719.8" y1="520" x2="719.8" y2="529.2"/></g>
</svg>
</body></html>
